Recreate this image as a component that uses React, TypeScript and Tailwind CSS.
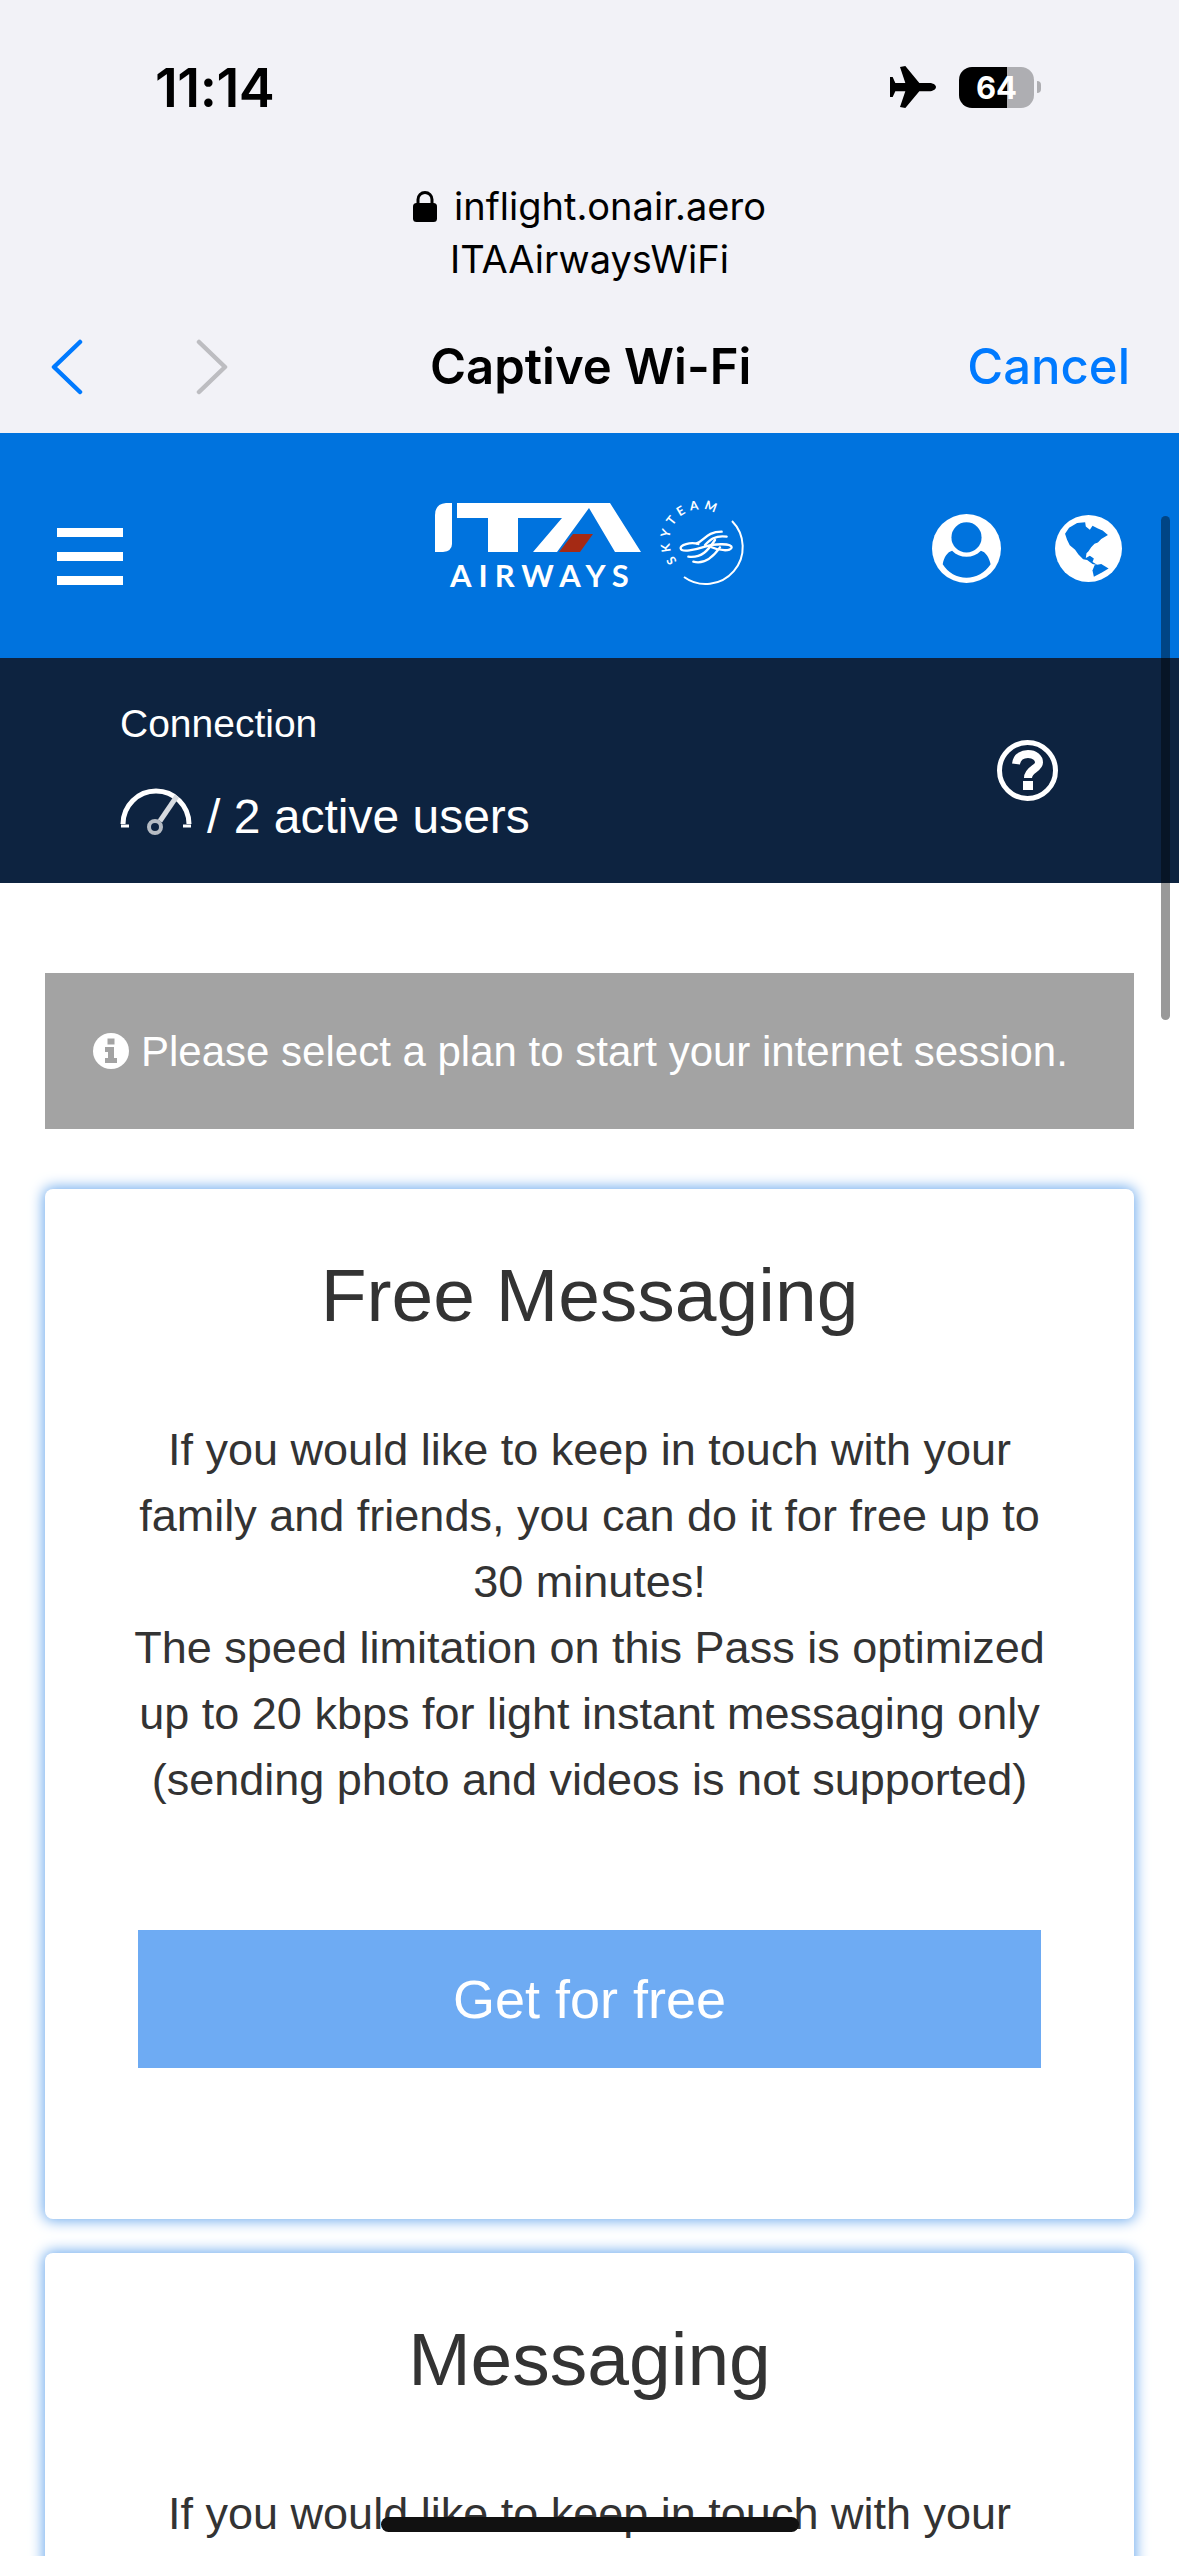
const StatusBar = () => (
  <div className="flex h-[176px] items-start justify-between pt-[58px] pl-[155px] pr-[138px] font-['Inter',sans-serif]">
    <span className="text-[54px] font-semibold leading-[60px] tracking-[-0.5px] text-black">11:14</span>
    <div className="mt-[8px] flex items-center gap-[23px]">
      <svg width="46" height="42" viewBox="30 22 138 126" fill="black">
        <path d="M168 85 C168 78 158 73 148 73 L118 73 L76 22 L60 25 L76 73 L46 73 L38 55 L30 55 L30 115 L38 115 L46 98 L76 98 L60 145 L76 148 L118 98 L148 98 C158 98 168 92 168 85 Z" />
      </svg>
      <div className="flex items-center gap-[3px]">
        <div className="flex h-[41px] w-[75px] items-center justify-center rounded-[13px] bg-[linear-gradient(90deg,#000_64%,#aeaeb2_64%)] text-[31px] font-bold leading-none text-white">
          64
        </div>
        <div className="h-[12px] w-[4px] rounded-r-full bg-[#aeaeb2]" />
      </div>
    </div>
  </div>
);

const UrlBlock = () => (
  <div className="flex h-[110px] flex-col items-center pt-[4px] font-['Inter',sans-serif] text-[38px] leading-[53px] text-black">
    <div className="flex items-center gap-[17px]">
      <svg width="24" height="31" viewBox="0 0 24 31" fill="black">
        <path d="M5 13 V8.5 a7 7 0 0 1 14 0 V13" fill="none" stroke="black" strokeWidth="3" />
        <rect x="0" y="12" width="24" height="19" rx="3.5" />
      </svg>
      <span>inflight.onair.aero</span>
    </div>
    <span>ITAAirwaysWiFi</span>
  </div>
);

const NavRow = () => (
  <div className="flex h-[147px] items-center pt-[14px] pl-[50px] pr-[49px] font-['Inter',sans-serif]">
    <svg width="34" height="56" viewBox="0 0 34 56" fill="none" stroke="#007aff" strokeWidth="4.5" strokeLinecap="round" strokeLinejoin="round" className="shrink-0">
      <path d="M30 3 L4 28 L30 53" />
    </svg>
    <svg className="ml-[111px] shrink-0" width="34" height="56" viewBox="0 0 34 56" fill="none" stroke="#bdbdc1" strokeWidth="4.5" strokeLinecap="round" strokeLinejoin="round">
      <path d="M4 3 L30 28 L4 53" />
    </svg>
    <span className="ml-[201px] whitespace-nowrap text-[49px] font-semibold text-black">Captive Wi-Fi</span>
    <span className="ml-auto text-[49px] font-medium text-[#007aff]">Cancel</span>
  </div>
);

const ItaLogo = () => (
  <svg width="320" height="100" viewBox="435 496 320 100" className="ml-[312px] shrink-0">
    <path d="M446 503 L452 503 L452 544 Q452 551 443 552 L435 552 L435 515 Q435 504 446 503 Z" fill="white" />
    <polygon points="457,503 610,503 641,552 615,552 589,508 557,552 533,552 562,518 518,518 518,552 488,552 488,518 457,518" fill="white" />
    <polygon points="573,534 593,534 580,552 559,552" fill="#a52a14" />
    <text x="450" y="587" fontFamily="Lato, sans-serif" fontWeight="700" fontSize="31" letterSpacing="7" fill="white">AIRWAYS</text>
    <path d="M732 521 A37 37 0 0 1 684 577" fill="none" stroke="white" strokeWidth="2" />
    <path id="skyteam-ring" d="M677.4 561 A31 31 0 1 1 728 526" fill="none" />
    <text fontFamily="Lato, sans-serif" fontWeight="700" fontSize="12.5" letterSpacing="4.5" fill="white">
      <textPath href="#skyteam-ring">SKYTEAM</textPath>
    </text>
    <g transform="translate(640 490) scale(0.3333)" fill="none" stroke="white" strokeWidth="7" strokeLinecap="round">
      <path d="M175 162 C150 155 120 165 122 175 C124 188 165 180 195 170 C225 160 275 160 275 172 C275 185 235 182 215 172" />
      <path d="M170 160 C195 150 200 125 245 125" />
      <path d="M195 165 C210 150 225 135 260 140" />
      <path d="M145 200 C185 205 205 180 225 150" />
      <path d="M160 215 C195 225 220 200 240 172" />
    </g>
  </svg>
);

const UserIcon = () => (
  <svg width="69" height="69" viewBox="0 0 206 206" className="shrink-0">
    <circle cx="103" cy="103" r="103" fill="white" />
    <circle cx="103" cy="70" r="45" fill="#0073de" />
    <path d="M32 150 C36 128 46 114 60 110 C72 122 86 128 103 128 C120 128 134 122 146 110 C160 114 170 128 175 150 C158 176 132 190 103 190 C74 190 48 176 32 150 Z" fill="#0073de" />
  </svg>
);

const GlobeIcon = () => (
  <svg width="67" height="67" viewBox="0 0 200 200" className="ml-[54px] shrink-0">
    <circle cx="100" cy="100" r="100" fill="white" />
    <path d="M30 56 L42 38 L66 24 L90 22 L92 34 L104 44 L112 32 L128 40 L142 46 L158 60 L138 72 L128 82 L118 86 L108 96 L100 108 L94 114 L92 128 L104 122 L116 130 L112 140 L128 150 L112 146 L96 134 L84 132 L70 118 L60 104 L44 90 L36 74 Z" fill="#0073de" />
    <path d="M118 150 L138 146 L160 160 L140 172 L116 184 L112 166 Z" fill="#0073de" />
  </svg>
);

const SpeedIcon = () => (
  <svg width="72" height="50" viewBox="0 0 72 50" fill="none" stroke="white" className="-mt-[6px] shrink-0 self-start">
    <path d="M3 38 A33 33 0 0 1 69 38" strokeWidth="5" />
    <path d="M1 40 H9 M63 40 H71" strokeWidth="3" />
    <path d="M40 35 L57 10" strokeWidth="5" stroke="#d7dbe0" />
    <circle cx="35" cy="41" r="6" strokeWidth="4" stroke="#b5bbc3" />
  </svg>
);

const HelpIcon = () => (
  <svg width="61" height="61" viewBox="0 0 61 61" fill="none" className="shrink-0">
    <circle cx="30.5" cy="30.5" r="28" stroke="white" strokeWidth="5" />
    <path d="M19 24 C20 16 26 14 31 14 C38 14 42 18 42 22.5 C42 29 31 29 31 38" stroke="white" strokeWidth="8" />
    <rect x="26" y="41" width="10" height="9" fill="white" />
  </svg>
);

const InfoIcon = () => (
  <svg width="36" height="36" viewBox="0 0 36 36" className="shrink-0">
    <circle cx="18" cy="18" r="18" fill="white" />
    <rect x="14.5" y="5.5" width="7" height="6" fill="#a3a3a3" />
    <path d="M12 14 H21 V25 H24 V30 H12 V25 H15 V19 H12 Z" fill="#a3a3a3" />
  </svg>
);

const PlanCard = ({ title, children, tall }: { title: string; children: React.ReactNode; tall?: boolean }) => (
  <div className={`mx-[45px] flex shrink-0 flex-col items-center rounded-[8px] bg-white px-[93px] pt-[66px] shadow-[0_0_14px_2px_#72adee] ${tall ? "h-[1030px]" : "h-[600px]"}`}>
    <h2 className="text-[75px] leading-[80px] text-[#333333]">{title}</h2>
    <p className="mt-[82px] w-[925px] shrink-0 text-center text-[45px] leading-[66px] text-[#333333]">{children}</p>
    {tall && (
      <button className="mt-[117px] flex h-[138px] w-full shrink-0 items-center justify-center bg-[#6eabf3] text-[54px] text-white">
        Get for free
      </button>
    )}
  </div>
);

const App = () => (
  <div className="relative h-[2556px] w-[1179px] overflow-hidden bg-white font-['Liberation_Sans',sans-serif]">
    <div className="h-[433px] bg-[#f2f2f7]">
      <StatusBar />
      <UrlBlock />
      <NavRow />
    </div>

    <div className="flex h-[225px] items-center bg-[#0073de] pl-[57px]">
      <div className="mt-[21px] flex w-[66px] shrink-0 flex-col gap-[15px]">
        <div className="h-[9px] bg-white" />
        <div className="h-[9px] bg-white" />
        <div className="h-[9px] bg-white" />
      </div>
      <ItaLogo />
      <div className="ml-[177px] mt-[6px] flex items-center">
        <UserIcon />
        <GlobeIcon />
      </div>
    </div>

    <div className="flex h-[225px] items-center justify-between bg-[#0d2340] pl-[120px] pr-[121px] text-white">
      <div className="flex flex-col">
        <span className="text-[39px] leading-[50px]">Connection</span>
        <div className="mt-[43px] flex items-center gap-[15px]">
          <SpeedIcon />
          <span className="text-[48px] leading-[50px]">/ 2 active users</span>
        </div>
      </div>
      <HelpIcon />
    </div>

    <div className="mx-[45px] mt-[90px] flex h-[156px] items-center gap-[12px] bg-[#a3a3a3] pl-[48px] text-[42px] text-white">
      <InfoIcon />
      <span>Please select a plan to start your internet session.</span>
    </div>

    <div className="mt-[60px] flex flex-col gap-[34px]">
      <PlanCard title="Free Messaging" tall>
        If you would like to keep in touch with your family and friends, you can do it for free up to 30 minutes!
        <br />
        The speed limitation on this Pass is optimized up to 20 kbps for light instant messaging only (sending photo and videos is not supported)
      </PlanCard>
      <PlanCard title="Messaging">If you would like to keep in touch with your</PlanCard>
    </div>

    <div className="absolute right-[9px] top-[516px] h-[504px] w-[9px] rounded-full bg-black/40" />
    <div className="absolute left-[381px] top-[2517px] h-[15px] w-[418px] rounded-full bg-[#111111]" />
  </div>
);

export default App;
